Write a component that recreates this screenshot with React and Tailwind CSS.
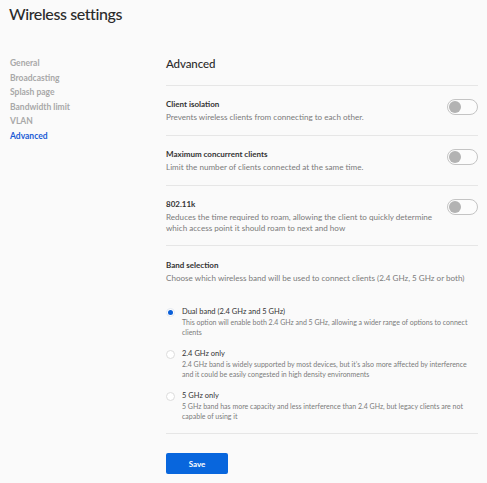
import React from "react";

function Toggle() {
  return (
    <div className="mt-[1px] flex h-[16px] w-[31px] shrink-0 items-center rounded-full border border-[#c4c4c4] bg-[#fcfcfc] px-[1px]">
      <div className="h-[12px] w-[12px] rounded-full bg-[#b3b3b3]" />
    </div>
  );
}

function ToggleRow({ title, desc, tight }) {
  return (
    <div
      className={
        tight
          ? "flex items-start justify-between gap-[8px] border-t border-[#e6e6e6] pb-[11px] pt-[12px]"
          : "flex items-start justify-between gap-[8px] border-t border-[#e6e6e6] pb-[12px] pt-[12px]"
      }
    >
      <div className="w-[272px]">
        <div className="text-[8px] font-bold leading-[12px] text-[#333]">{title}</div>
        <div className="mt-[2px] text-[8.1px] leading-[11px] text-[#7a7a7a]">{desc}</div>
      </div>
      <Toggle />
    </div>
  );
}

function Radio({ checked, title, desc }) {
  return (
    <div className="flex items-start gap-[7px]">
      <div className="flex h-[10px] w-[9px] shrink-0 items-center justify-center">
        {checked ? (
          <div className="flex h-[9px] w-[9px] items-center justify-center rounded-full border border-[#e3e8f0] bg-white">
            <div className="h-[5px] w-[5px] rounded-full bg-[#0a5fd8]" />
          </div>
        ) : (
          <div className="h-[9px] w-[9px] rounded-full border border-[#dcdcdc] bg-white" />
        )}
      </div>
      <div className="flex-1">
        <div className="text-[7.5px] leading-[10px] text-[#333]">{title}</div>
        <div className="text-[7px] leading-[10px] text-[#7a7a7a]">{desc}</div>
      </div>
    </div>
  );
}

export default function App() {
  const nav = ["General", "Broadcasting", "Splash page", "Bandwidth limit", "VLAN", "Advanced"];
  return (
    <div className="min-h-screen w-full bg-[#fafafa] font-[Lato,sans-serif] text-[#333]">
      <div className="h-[56px] px-[9px] pt-[4px]">
        <h1 className="text-[16px] font-medium leading-[20px] tracking-[-0.4px] text-[#2b2b2b]">Wireless settings</h1>
      </div>
      <div className="flex">
        <nav className="w-[166px] shrink-0 pl-[10px]">
          {nav.map((n) => (
            <div
              key={n}
              className={
                n === "Advanced"
                  ? "text-[8.5px] font-bold leading-[14.5px] text-[#1a5cd6]"
                  : "text-[8.5px] font-bold leading-[14.5px] text-[#a8a8a8]"
              }
            >
              {n}
            </div>
          ))}
        </nav>
        <main className="w-[312px]">
          <h2 className="mb-[13px] text-[11.5px] font-medium leading-[16px] tracking-[-0.1px] text-[#2b2b2b]">Advanced</h2>
          <ToggleRow title="Client isolation" desc="Prevents wireless clients from connecting to each other." />
          <ToggleRow title="Maximum concurrent clients" desc="Limit the number of clients connected at the same time." />
          <ToggleRow
            tight
            title="802.11k"
            desc="Reduces the time required to roam, allowing the client to quickly determine which access point it should roam to next and how"
          />
          <div className="border-y border-[#e6e6e6] pb-[12px] pt-[13px]">
            <div className="text-[8px] font-bold leading-[12px] text-[#333]">Band selection</div>
            <div className="mt-[2px] text-[8.1px] leading-[11px] text-[#7a7a7a]">
              Choose which wireless band will be used to connect clients (2.4 GHz, 5 GHz or both)
            </div>
            <div className="mt-[23px] flex flex-col gap-[12px]">
              <Radio
                checked
                title="Dual band (2.4 GHz and 5 GHz)"
                desc="This option will enable both 2.4 GHz and 5 GHz, allowing a wider range of options to connect clients"
              />
              <Radio
                title="2.4 GHz only"
                desc="2.4 GHz band is widely supported by most devices, but it’s also more affected by interference and it could be easily congested in high density environments"
              />
              <Radio
                title="5 GHz only"
                desc="5 GHz band has more capacity and less interference than 2.4 GHz, but legacy clients are not capable of using it"
              />
            </div>
          </div>
          <button className="mt-[19px] h-[21px] w-[62px] rounded-[2px] bg-[#0866dd] text-[8px] font-bold text-white">
            Save
          </button>
        </main>
      </div>
    </div>
  );
}
